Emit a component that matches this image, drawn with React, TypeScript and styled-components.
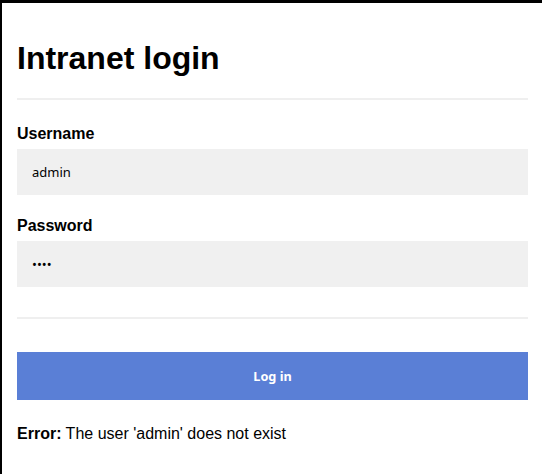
import React from "react";
import styled, { createGlobalStyle } from "styled-components";

const Global = createGlobalStyle`
  html, body { margin: 0; padding: 0; background: #ffffff; }
  body { font-family: "Liberation Sans", Arial, sans-serif; color: #000; }
  * { box-sizing: border-box; }
`;

const Page = styled.div`
  border-top: 3px solid #000;
  border-left: 2px solid #000;
  padding: 37px 14px 30px 15px;
  min-height: 474px;
`;

const Title = styled.h1`
  margin: 0;
  font-size: 32px;
  line-height: 37px;
  font-weight: 700;
`;

const Divider = styled.hr<{ $top: number; $bottom: number }>`
  border: 0;
  height: 2px;
  background: #efefef;
  margin: ${(p) => p.$top}px 0 ${(p) => p.$bottom}px;
`;

const Form = styled.form`
  display: flex;
  flex-direction: column;
`;

const Field = styled.div<{ $gap: number }>`
  display: flex;
  flex-direction: column;
  margin-bottom: ${(p) => p.$gap}px;
`;

const Label = styled.label`
  font-size: 16px;
  line-height: 18px;
  font-weight: 700;
  margin-bottom: 6px;
`;

const Input = styled.input`
  height: 46px;
  border: 0;
  outline: none;
  background: #f0f0f0;
  padding: 0 15px;
  font-family: "Noto Sans", sans-serif;
  font-size: 13px;
  color: #000;
`;

const Button = styled.button`
  height: 48px;
  border: 0;
  background: #5a7fd6;
  color: #fff;
  font-family: "Noto Sans", sans-serif;
  font-size: 12.7px;
  font-weight: 700;
  cursor: pointer;
`;

const ErrorText = styled.p`
  margin: 25px 0 0;
  font-size: 16px;
  line-height: 18px;
`;

export default function App() {
  return (
    <>
      <Global />
      <Page>
        <Title>Intranet login</Title>
        <Divider $top={21} $bottom={25} />
        <Form onSubmit={(e) => e.preventDefault()}>
          <Field $gap={22}>
            <Label htmlFor="u">Username</Label>
            <Input id="u" type="text" defaultValue="admin" readOnly />
          </Field>
          <Field $gap={0}>
            <Label htmlFor="p">Password</Label>
            <Input id="p" type="password" defaultValue="1234" readOnly />
          </Field>
          <Divider $top={30} $bottom={33} />
          <Button type="submit">Log in</Button>
        </Form>
        <ErrorText>
          <b>Error:</b> The user 'admin' does not exist
        </ErrorText>
      </Page>
    </>
  );
}
